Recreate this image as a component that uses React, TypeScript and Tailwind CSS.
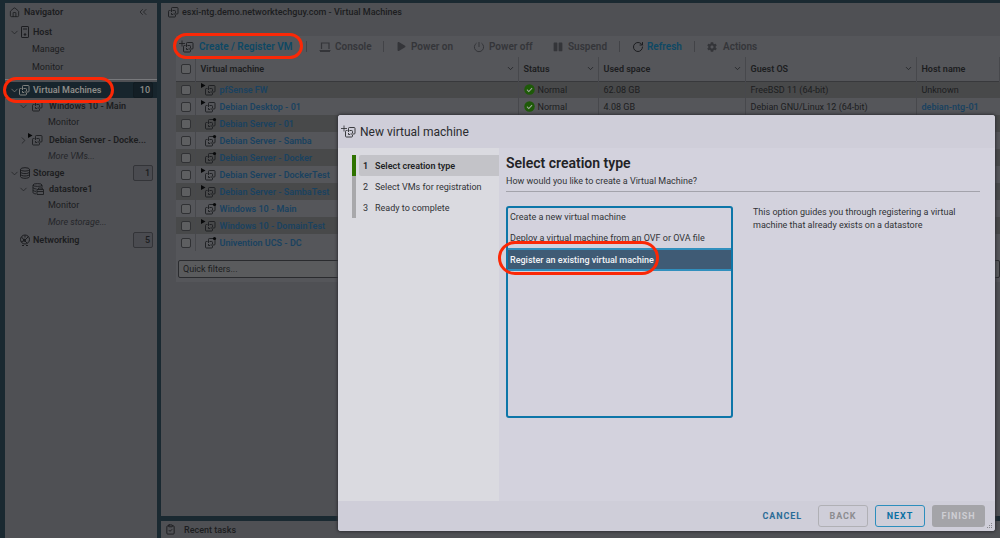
import React, { useState } from 'react';
import { ChevronDownIcon, ChevronRightIcon, ChevronsLeftIcon, ClipboardCheckIcon, HomeIcon, RotateCwIcon } from 'lucide-react';
import { FaCog, FaPause, FaPlay } from 'react-icons/fa';
import { clsx } from 'clsx';

type VmState = 'running' | 'off' | 'new' | 'none';

interface Vm {
    name: string;
    state: VmState;
    status?: string;
    used?: string;
    os?: string;
    host?: string;
}

const VMS: Vm[] = [
    { name: 'pfSense FW', state: 'running', status: 'Normal', used: '62.08 GB', os: 'FreeBSD 11 (64-bit)', host: 'Unknown' },
    { name: 'Debian Desktop - 01', state: 'running', status: 'Normal', used: '4.08 GB', os: 'Debian GNU/Linux 12 (64-bit)', host: 'debian-ntg-01' },
    { name: 'Debian Server - 01', state: 'off' },
    { name: 'Debian Server - Samba', state: 'off' },
    { name: 'Debian Server - Docker', state: 'off' },
    { name: 'Debian Server - DockerTest', state: 'running' },
    { name: 'Debian Server - SambaTest', state: 'running' },
    { name: 'Windows 10 - Main', state: 'off' },
    { name: 'Windows 10 - DomainTest', state: 'running' },
    { name: 'Univention UCS - DC', state: 'off' },
];

const CREATION_TYPES = [
    'Create a new virtual machine',
    'Deploy a virtual machine from an OVF or OVA file',
    'Register an existing virtual machine',
];

const STEPS = ['Select creation type', 'Select VMs for registration', 'Ready to complete'];

/* Two overlapping machines, with a play mark, a dot or a plus */
const VmIcon: React.FC<{ state?: VmState; className?: string }> = ({ state = 'none', className }) => (
    <svg viewBox="0 0 16 14" className={clsx('h-[14px] w-4 shrink-0', className)} fill="none" stroke="currentColor" strokeWidth=".9">
        <path d="M7.500 7V3.400a.9.9 0 0 1 .9-.9h4.700a.9.9 0 0 1 .9.900v4.700a.9.9 0 0 1-.9.9H9.500" />
        <path d="M6.500 5.500H5.400a.9.9 0 0 0-.9.9v4.700a.9.9 0 0 0 .9.9h5.200a.9.9 0 0 0 .9-.9V10" />
        <path d="M8.500 5.500h2.100a.9.9 0 0 1 .9.900V8M7.500 8v1.500h1.500" />
        {state === 'running' && <path d="M0 0l4.500 2.500L0 5z" fill="#08090a" stroke="none" />}
        {state === 'off' && <circle cx="13.500" cy="2.500" r="1.600" fill="#08090a" stroke="none" />}
        {state === 'new' && <path d="M0 3.500h6M3 .5v6" strokeWidth=".8" />}
    </svg>
);

const HostIcon = () => (
    <svg viewBox="0 0 12 12" className="h-3 w-3 shrink-0" fill="none" stroke="currentColor">
        <rect x="2.500" y=".5" width="7" height="11" rx=".6" />
        <path d="M4 3h4" />
        <circle cx="6" cy="8.500" r=".8" fill="currentColor" />
    </svg>
);

const StorageIcon = () => (
    <svg viewBox="0 0 12 12" className="h-3 w-3 shrink-0" fill="none" stroke="currentColor">
        <ellipse cx="6" cy="2.400" rx="4.500" ry="1.700" />
        <path d="M1.500 2.400v7.200c0 .9 2 1.700 4.500 1.700s4.500-.8 4.500-1.700V2.400M1.500 4.900c0 .9 2 1.700 4.500 1.700s4.500-.8 4.500-1.700M1.500 7.300C1.500 8.200 3.500 9 6 9s4.500-.8 4.500-1.700" />
    </svg>
);

const DatastoreIcon = () => (
    <svg viewBox="0 0 12 12" className="h-3 w-3 shrink-0" fill="none" stroke="currentColor" strokeWidth=".9">
        <ellipse cx="5.500" cy="2" rx="4.500" ry="1.400" />
        <path d="M1 2v7.500c0 .8 1.400 1.300 3 1.400M10 2v2.500M1 4.500c0 .8 1.600 1.400 3.500 1.400M1 7c0 .8 1.400 1.300 3 1.400" />
        <path d="M5 6.500h6.500v5H5zM6.500 6.300V5h3.800v1.300M5 8.500h6.500" />
    </svg>
);

const NetworkIcon = () => (
    <svg viewBox="0 0 12 12" className="h-3 w-3 shrink-0" fill="none" stroke="currentColor">
        <circle cx="6" cy="5.500" r="4.500" />
        <path d="M2.500 3l3 3.500 4-4M5.500 6.500l2.500 2.500M2 8l3.500-1.500M6 1.500v2" />
        <path d="M3 11.500h2M7 11.500h2" strokeWidth="1.200" />
        <circle cx="5.500" cy="6.300" r="1" fill="currentColor" />
    </svg>
);

const ConsoleIcon = () => (
    <svg viewBox="0 0 12 12" className="h-3 w-3 shrink-0" fill="none" stroke="currentColor" strokeWidth="1.200">
        <path d="M2.500 8V2h7.500v6M.5 9.500h11M1 10.500h10" />
    </svg>
);

const PowerIcon = () => (
    <svg viewBox="0 0 12 12" className="h-3 w-3 shrink-0" fill="none" stroke="currentColor">
        <path d="M6 1v5M3.500 2.200a4.600 4.600 0 1 0 5 0" />
    </svg>
);

const OkIcon = () => (
    <svg viewBox="0 0 12 12" className="h-[11px] w-[11px] shrink-0">
        <circle cx="6" cy="6" r="5.700" fill="#1e5a08" />
        <path d="M3.200 6.200l2 2 3.600-3.800" fill="none" stroke="#a5a8a2" strokeWidth="1.100" />
    </svg>
);

/* Red outline that calls attention to a control */
const Callout: React.FC<{ className: string }> = ({ className }) => (
    <span className={clsx('pointer-events-none absolute z-20 rounded-full border-[3px] border-[#fb2806]', className)} />
);

interface NavRowProps {
    label: string;
    icon?: React.ReactNode;
    open?: boolean;
    level?: number;
    count?: number;
    active?: boolean;
    className?: string;
}

const NavRow: React.FC<NavRowProps> = ({ label, icon, open, level = 0, count, active, className }) => (
    <li className={clsx('relative flex h-4 items-center pr-1', level ? 'pl-[13px]' : 'pl-1', active && 'bg-[#17252d] text-[#8c8c88]', className)}>
        <span className={clsx('shrink-0', level ? 'w-3' : 'w-2.5')}>
            {open === true && <ChevronDownIcon className="h-[11px] w-[11px]" strokeWidth={1.5} />}
            {open === false && <ChevronRightIcon className="h-[11px] w-[11px]" strokeWidth={1.5} />}
        </span>
        <span className={clsx('flex shrink-0 items-center justify-end', level ? 'w-3.5' : 'w-3')}>{icon}</span>
        <a href="#" className={clsx('font-semibold whitespace-nowrap', level ? 'pl-[5px]' : 'pl-0.5')}>
            {label}
        </a>
        {count !== undefined && (
            <span className={clsx('ml-auto flex h-4 w-5 shrink-0 items-center justify-end rounded-xs border pr-0.5 font-medium', active ? 'border-[#111b21] bg-[#131e25]' : 'border-[#333438] bg-[#4a4b50]')}>
                {count}
            </span>
        )}
        {active && <Callout className="-top-[5px] -left-[2px] h-[26px] w-[111px]" />}
    </li>
);

const NavLeaf: React.FC<{ label: string; level?: number; more?: boolean; className?: string }> = ({ label, level = 1, more, className }) => (
    <li className={clsx('flex h-4 items-center', level === 1 ? 'pl-[27px]' : 'pl-[43px]', more && 'text-[#25262a] italic', className)}>
        <a href="#">{label}</a>
    </li>
);

const Navigator = () => (
    <nav className="w-[152px] shrink-0 bg-[#4f5054]">
        <div className="flex h-[18px] items-center gap-1 px-1">
            <HomeIcon className="h-[11px] w-[11px]" strokeWidth={1.8} />
            <span className="font-semibold">Navigator</span>
            <button className="mr-1 ml-auto" aria-label="Collapse">
                <ChevronsLeftIcon className="h-3 w-3" strokeWidth={1.5} />
            </button>
        </div>
        <ul>
            <NavRow label="Host" icon={<HostIcon />} open className="mt-[3px]" />
            <NavLeaf label="Manage" className="mt-px" />
            <NavLeaf label="Monitor" className="mt-0.5" />
            <li className="mt-1 mb-0.5 border-t border-[#77787b]" />
            <NavRow label="Virtual Machines" icon={<VmIcon />} open count={10} active />
            <NavRow label="Windows 10 - Main" icon={<VmIcon />} open level={1} />
            <NavLeaf label="Monitor" level={2} />
            <NavRow label="Debian Server - Docke..." icon={<VmIcon state="running" />} open={false} level={1} className="mt-0.5" />
            <NavLeaf label="More VMs..." level={2} more />
            <NavRow label="Storage" icon={<StorageIcon />} open count={1} className="mt-px" />
            <NavRow label="datastore1" icon={<DatastoreIcon />} open level={1} />
            <NavLeaf label="Monitor" level={2} />
            <NavLeaf label="More storage..." level={2} more className="mt-px" />
            <NavRow label="Networking" icon={<NetworkIcon />} count={5} className="mt-0.5" />
        </ul>
    </nav>
);

const Divider = () => <span className="h-[11px] w-px bg-[#424347]" />;

const Toolbar = () => (
    <div className="flex h-[21px] items-center text-[10px] font-semibold text-[#343539]">
        <button className="relative flex w-[130px] shrink-0 items-center gap-1 pl-[3px] text-[#0d4864]">
            <VmIcon state="new" className="text-[#1c1d20]" />
            Create / Register VM
            <Callout className="-top-[7px] -left-[3px] h-[26px] w-[130px]" />
        </button>
        <Divider />
        <button className="flex w-[76px] items-center gap-1 pl-3"><ConsoleIcon />Console</button>
        <Divider />
        <button className="flex w-[76px] items-center gap-[5px] pl-[13px] whitespace-nowrap"><FaPlay className="h-[9px] w-[9px]" />Power on</button>
        <button className="flex w-[80px] items-center gap-1 pl-[13px] whitespace-nowrap"><PowerIcon />Power off</button>
        <button className="flex w-[79px] items-center gap-[5px] pl-[13px]"><FaPause className="h-[10px] w-[10px]" />Suspend</button>
        <Divider />
        <button className="flex w-[74px] items-center gap-[3px] pl-3 text-[#0d4864]"><RotateCwIcon className="h-3 w-3 text-[#1c1d20]" />Refresh</button>
        <Divider />
        <button className="flex items-center gap-1.5 pl-3"><FaCog className="h-[10px] w-[10px]" />Actions</button>
    </div>
);

const COLUMNS = [
    { label: 'Virtual machine', width: 'w-[323px]' },
    { label: 'Status', width: 'w-[80px]' },
    { label: 'Used space', width: 'w-[147px]' },
    { label: 'Guest OS', width: 'w-[171px]' },
    { label: 'Host name', width: '' },
];

const CHECKBOX = 'block h-[10px] w-[10px] appearance-none rounded-xs border border-[#303134] bg-[#5e5f61]';

const VmTable = () => (
    <table className="w-full table-fixed border-collapse text-left">
        <thead>
            <tr className="h-[24px] border-b border-[#38393c] bg-[#55565a]">
                <th className="w-[19px] border-r border-[#47484c] pl-[5px]"><input type="checkbox" aria-label="Select all" className={CHECKBOX} /></th>
                {COLUMNS.map((col) => (
                    <th key={col.label} className={clsx('border-r border-[#47484c] pr-[3px] pl-[5px] font-semibold', col.width)}>
                        <span className="flex items-center justify-between">
                            {col.label}
                            {col.width && <ChevronDownIcon className="h-[9px] w-[9px]" />}
                        </span>
                    </th>
                ))}
            </tr>
        </thead>
        <tbody>
            {VMS.map((vm) => (
                <tr key={vm.name} className="h-[17px] odd:bg-[#48494a] even:bg-[#55565a]">
                    <td className="border-r border-[#47484c] pl-[5px]"><input type="checkbox" aria-label={vm.name} className={CHECKBOX} /></td>
                    <td className="border-r border-[#47484c] pl-[5px]">
                        <a href="#" className="flex items-center gap-[3px] font-semibold text-[#1a4260]">
                            <VmIcon state={vm.state} className="text-[#1c1d20]" />
                            {vm.name}
                        </a>
                    </td>
                    <td className="border-r border-[#47484c] pl-[5px]">
                        {vm.status && <span className="flex items-center gap-[3px]"><OkIcon />{vm.status}</span>}
                    </td>
                    <td className="border-r border-[#47484c] pl-[5px]">{vm.used}</td>
                    <td className="border-r border-[#47484c] pl-[5px]">{vm.os}</td>
                    <td className="truncate pl-[5px]">
                        {vm.host === 'Unknown' ? vm.host : <a href="#" className="font-semibold text-[#1a4260]">{vm.host}</a>}
                    </td>
                </tr>
            ))}
        </tbody>
    </table>
);

const Dialog = () => {
    const [type, setType] = useState(CREATION_TYPES[2]);

    return (
        <div role="dialog" className="absolute top-[115px] right-[5px] bottom-[7px] left-[338px] z-10 flex flex-col overflow-hidden rounded-[3px] bg-[#d3d2dd] text-[#313236] shadow-[0_0_3px_1px_#303136]">
            <header className="flex h-[33px] shrink-0 items-center gap-[3px] bg-[#cfced9] pl-[3px] text-[12px] text-[#2a2b2e]">
                <VmIcon state="new" />
                <h1>New virtual machine</h1>
            </header>
            <div className="flex min-h-0 flex-1">
                <aside className="w-[161px] shrink-0 bg-[#dadae0] pt-[7px] pl-[14px]">
                    <ol>
                        {STEPS.map((step, i) => (
                            <li key={step} className={clsx('flex h-[21px] items-center border-l-4', i === 0 ? 'border-[#2f7300]' : 'border-[#a8a8ab]')}>
                                <button className={clsx('ml-[3px] flex h-full flex-1 items-center rounded-l-xs pl-1 whitespace-nowrap', i === 0 && 'bg-[#c3c3c8] font-semibold text-[#222326]')}>
                                    <span className="w-3 text-left">{i + 1}</span>
                                    {step}
                                </button>
                            </li>
                        ))}
                    </ol>
                </aside>
                <section className="flex min-w-0 flex-1 flex-col pt-[6px] pr-[15px] pl-[7px]">
                    <h2 className="text-[14px] leading-[18px] font-semibold text-[#222326]">Select creation type</h2>
                    <label htmlFor="creation-type" className="mt-[3px] border-b border-[#a3a3ab] pb-1 leading-3">
                        How would you like to create a Virtual Machine?
                    </label>
                    <div className="mt-[14px] flex gap-5">
                        <div className="relative w-[227px] shrink-0">
                            <select
                                id="creation-type"
                                size={10}
                                value={type}
                                onChange={(e) => setType(e.target.value)}
                                className="h-[212px] w-full rounded-[3px] bg-transparent px-0.5 outline-none ring-2 ring-[#0d76a8] ring-inset"
                            >
                                {CREATION_TYPES.map((t) => (
                                    <option
                                        key={t}
                                        className="flex h-[21px] items-center px-0.5 py-0 checked:h-[23px] checked:border-y-2 checked:border-[#318fbd] checked:bg-[#3f5b75] checked:font-medium checked:text-[#f2f3f6]"
                                    >
                                        {t}
                                    </option>
                                ))}
                            </select>
                            <Callout className="top-[35px] -left-[8px] h-[34px] w-[161px]" />
                        </div>
                        <p className="leading-[13px]">
                            This option guides you through registering a virtual machine that already exists on a datastore
                        </p>
                    </div>
                </section>
            </div>
            <footer className="relative flex h-[30px] shrink-0 items-center justify-end gap-[7px] bg-[#cfced9] pr-[10px] font-bold tracking-widest">
                <button className="mr-[9px] text-[#2b6c97]">CANCEL</button>
                <button className="h-[22px] w-[50px] rounded-[3px] border border-[#b0b0b5] text-[#8c8c90]">BACK</button>
                <button className="h-[22px] w-[50px] rounded-[3px] border border-[#2c8ebd] text-[#0b70a3]">NEXT</button>
                <button className="h-[22px] w-[53px] rounded-[3px] bg-[#a4a4a8] text-[#ceced3]">FINISH</button>
                <svg viewBox="0 0 6 6" className="absolute right-0.5 bottom-0.5 h-1.5 w-1.5" fill="#85858b">
                    <path d="M4 0h1v1H4zM2 2h1v1H2zM4 2h1v1H4zM0 4h1v1H0zM2 4h1v1H2zM4 4h1v1H4z" />
                </svg>
            </footer>
        </div>
    );
};

const App = () => (
    <div className="relative flex h-screen gap-1 overflow-hidden bg-[#1a2931] pt-[3px] pl-[5px] font-[Roboto,sans-serif] text-[9px] leading-3 text-[#1c1d20]">
        <Navigator />
        <div className="flex min-w-0 flex-1 flex-col gap-[5px]">
            <main className="flex-1 bg-[#4f5054] pl-[15px]">
                <header className="-ml-[9px] flex h-[33px] items-start gap-0.5 pt-0.5 font-medium">
                    <VmIcon className="-ml-[3px]" />
                    <span className="pt-px">esxi-ntg.demo.networktechguy.com - Virtual Machines</span>
                </header>
                <div className="bg-[#55565a] pb-1">
                    <Toolbar />
                    <VmTable />
                    <div className="pt-[9px] pl-0.5">
                        <input aria-label="Quick filters" placeholder="Quick filters..." className="block h-[18px] w-full rounded-xs border border-[#2a2b2e] bg-[#5a5b5d] px-1 placeholder:text-[#1c1d20]" />
                    </div>
                </div>
            </main>
            <footer className="flex h-[17px] items-center gap-2 bg-[#4f5054] pl-1">
                <ClipboardCheckIcon className="h-[11px] w-[11px]" />
                <span className="font-medium">Recent tasks</span>
            </footer>
        </div>
        <Dialog />
    </div>
);

export default App;
